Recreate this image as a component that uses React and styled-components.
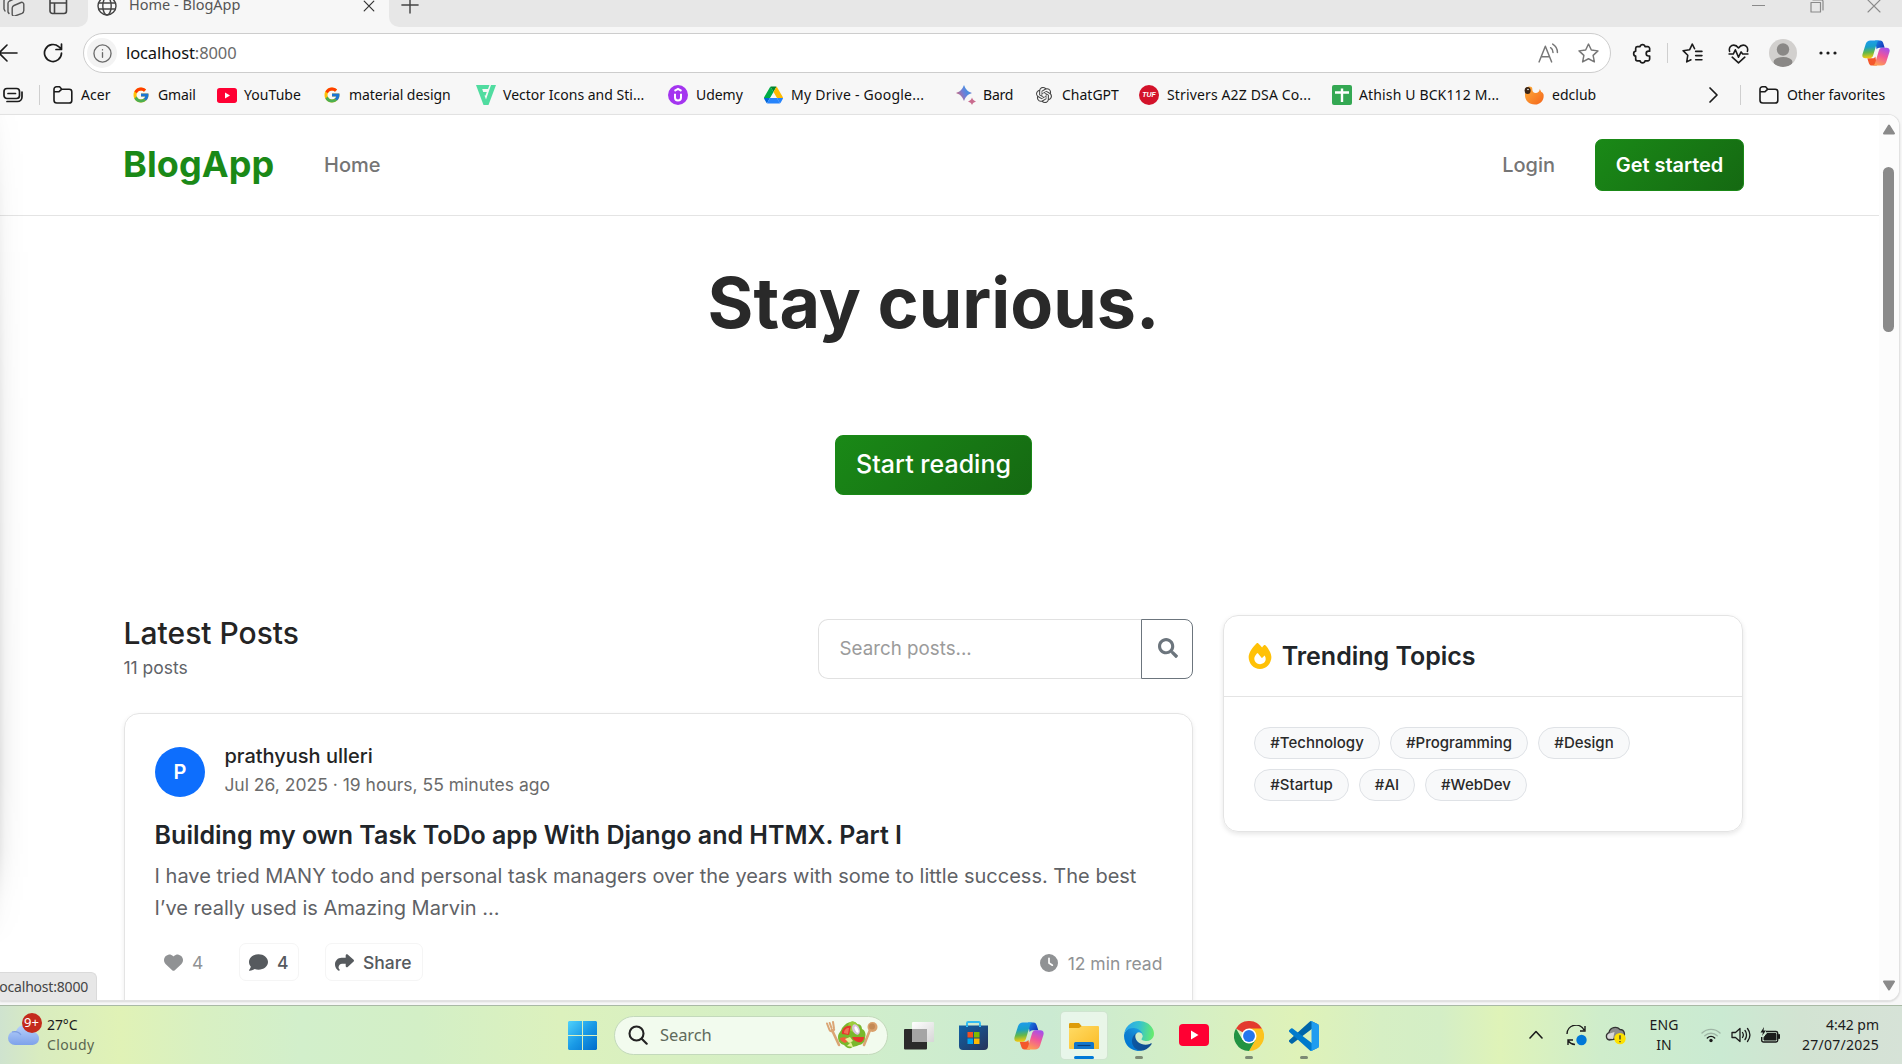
import React from "react";
import styled, { createGlobalStyle } from "styled-components";
import { FaHeart, FaComment, FaShare, FaClock, FaFire } from "react-icons/fa6";
import { FaSearch } from "react-icons/fa";
import { FcGoogle } from "react-icons/fc";
import { SiOpenai } from "react-icons/si";

const UI = '"Noto Sans", "Open Sans", sans-serif';
const BODY = 'Inter, "Liberation Sans", sans-serif';

const Global = createGlobalStyle`
  * { box-sizing: border-box; }
  html, body { margin: 0; padding: 0; overflow: hidden; }
  body { background: #f7f7f7; }
  svg { display: block; flex: none; }
`;

const Screen = styled.div`
  width: 1902px;
  height: 1064px;
  display: flex;
  flex-direction: column;
  overflow: hidden;
  background: #f7f7f7;
  font-family: ${UI};
`;

/* Generic flow slot for one item of a bar */
const Slot = styled.div`
  display: flex;
  align-items: ${(p) => (p.$top ? "flex-start" : "center")};
  flex: none;
  width: ${(p) => (p.$w ? p.$w + "px" : "auto")};
  height: ${(p) => (p.$h ? p.$h + "px" : "auto")};
  margin-left: ${(p) => p.$ml || 0}px;
`;

const Label = styled.span`
  font-size: ${(p) => p.$size || 14}px;
  letter-spacing: ${(p) => p.$ls || 0}px;
  color: ${(p) => p.$color || "#1b1b1b"};
  line-height: 20px;
  white-space: nowrap;
`;

/* ---------- Tab strip ---------- */
const TabStrip = styled.div`
  height: 27px;
  flex: none;
  display: flex;
  background: #f7f7f7;
`;
const StripLeft = styled.div`
  width: 88px;
  display: flex;
  background: #e7e7e7;
  border-bottom-right-radius: 10px;
`;
const ActiveTab = styled.div`
  width: 301px;
  display: flex;
  height: 11px;
  align-items: center;
`;
const TabTitle = styled(Label)`
  margin-top: -3px;
`;
const StripRight = styled.div`
  flex: 1;
  display: flex;
  background: #e7e7e7;
  border-bottom-left-radius: 10px;
`;

/* ---------- Toolbar ---------- */
const Toolbar = styled.div`
  height: 52px;
  flex: none;
  display: flex;
  align-items: center;
`;
const AddressBar = styled.div`
  width: 1528px;
  height: 40px;
  margin-left: 20px;
  display: flex;
  align-items: center;
  background: #fff;
  border: 1.5px solid #cdcdcd;
  border-radius: 20px;
`;
const InfoBadge = styled.div`
  width: 30px;
  height: 30px;
  margin-left: 3px;
  border-radius: 50%;
  background: #f3f3f3;
  display: grid;
  place-items: center;
`;
const Url = styled.span`
  width: 1404px;
  margin-left: 9px;
  font-size: 16.5px;
  letter-spacing: -0.1px;
  line-height: 24px;
  color: #111;
  em {
    font-style: normal;
    color: #6a6a6a;
  }
`;
const Divider = styled.div`
  width: 1px;
  height: 20px;
  flex: none;
  margin-left: ${(p) => p.$ml}px;
  background: #cfcfcf;
`;
const Avatar = styled.div`
  width: 28px;
  height: 28px;
  margin-left: 20px;
  border-radius: 50%;
  overflow: hidden;
  background: #d2d0ce;
`;

/* ---------- Favorites ---------- */
const Favorites = styled.div`
  height: 35px;
  flex: none;
  display: flex;
  align-items: center;
  padding-bottom: 3px;
`;
const Favorite = styled.div`
  width: ${(p) => p.$w}px;
  display: flex;
  align-items: center;
  gap: ${(p) => p.$gap || 7}px;
  flex: none;
`;
const FavIcon = styled.div`
  width: 20px;
  height: 20px;
  flex: none;
  display: grid;
  place-items: center;
`;
const TufBadge = styled.div`
  width: 20px;
  height: 20px;
  border-radius: 50%;
  background: #d3122a;
  color: #fff;
  font: italic 700 7px/20px "Liberation Sans", sans-serif;
  text-align: center;
`;

/* ---------- Page viewport ---------- */
const Viewport = styled.div`
  height: 887px;
  width: 1900px;
  flex: none;
  position: relative;
  display: flex;
  background: #fff;
  border: 1px solid #e2e2e2;
  border-left: 0;
  border-radius: 0 12px 12px 0;
  box-shadow: 0 1px 2px rgba(0, 0, 0, 0.12);
  overflow: hidden;
`;
const EdgeShadow = styled.div`
  position: absolute;
  left: 0;
  top: 0;
  width: 30px;
  height: 830px;
  pointer-events: none;
  background: linear-gradient(
    90deg,
    rgba(0, 0, 0, 0.11) 0,
    rgba(0, 0, 0, 0.055) 5px,
    rgba(0, 0, 0, 0.022) 12px,
    rgba(0, 0, 0, 0.008) 21px,
    transparent 30px
  );
  mask-image: linear-gradient(
    180deg,
    rgba(0, 0, 0, 0.1) 0,
    rgba(0, 0, 0, 0.4) 80px,
    rgba(0, 0, 0, 0.75) 280px,
    #000 660px,
    rgba(0, 0, 0, 0.8) 735px,
    rgba(0, 0, 0, 0.25) 785px,
    transparent 830px
  );
`;
const StatusBubble = styled.div`
  position: absolute;
  left: 0;
  bottom: 0;
  width: 97px;
  height: 28px;
  overflow: hidden;
  background: #e7e7e7;
  border: 1px solid #dadada;
  border-left: 0;
  border-bottom: 0;
  border-top-right-radius: 6px;
  display: flex;
  align-items: center;
  justify-content: flex-end;
  padding-right: 8px;
`;
const Page = styled.div`
  width: 1879px;
  height: 100%;
  overflow: hidden;
  font-family: ${BODY};
  color: #212529;
`;
const Scrollbar = styled.div`
  width: 20px;
  display: flex;
  flex-direction: column;
  align-items: center;
  background: #fcfcfc;
  padding: 9px 1px 0 0;
`;
const Thumb = styled.div`
  width: 11px;
  height: 165px;
  margin: 32px 0 648px 0;
  border-radius: 6px;
  background: #8a8a8a;
`;

const Nav = styled.nav`
  height: 101px;
  padding: 0 135px 0 123px;
  border-bottom: 1px solid #e4e4e4;
  display: flex;
  align-items: center;
`;
const Brand = styled.span`
  width: 201px;
  margin-top: -2px;
  font-size: 36px;
  font-weight: 700;
  letter-spacing: 0.1px;
  color: #1a8917;
`;
const NavLink = styled.span`
  font-size: 20px;
  font-weight: 500;
  color: #757575;
`;
const Button = styled.button`
  display: grid;
  place-items: center;
  height: ${(p) => (p.$large ? 60 : 52)}px;
  width: ${(p) => (p.$large ? 197 : 149)}px;
  padding: ${(p) => (p.$large ? "0 0 2px" : "0")};
  border: 1px solid #1a8917;
  border-radius: ${(p) => (p.$large ? 8 : 7)}px;
  background: linear-gradient(135deg, #1a8917 0%, #156912 100%);
  color: #fff;
  font-family: ${BODY};
  font-size: ${(p) => (p.$large ? 25 : 20)}px;
  font-weight: ${(p) => (p.$large ? 500 : 600)};
  letter-spacing: ${(p) => (p.$large ? 0 : -0.05)}px;
`;
const NavRight = styled.div`
  margin-left: auto;
  display: flex;
  align-items: center;
  gap: 40px;
`;

const Hero = styled.section`
  width: 1619px;
  height: 399px;
  margin-left: 124px;
  padding-top: 45px;
  display: flex;
  flex-direction: column;
  align-items: center;
`;
const HeroTitle = styled.h1`
  margin: 0 0 90px;
  font-size: 70px;
  line-height: 84px;
  font-weight: 700;
  color: #292929;
`;

const Columns = styled.div`
  display: flex;
  align-items: flex-start;
  gap: 30px;
  margin-left: 124px;
`;
const Feed = styled.main`
  width: 1069px;
`;
const FeedHead = styled.div`
  display: flex;
  justify-content: space-between;
  height: 98px;
`;
const FeedTitle = styled.h4`
  margin: 0 0 0 -0.4px;
  font-size: 30px;
  line-height: 36px;
  font-weight: 500;
  color: #242424;
`;
const FeedCount = styled.div`
  font-size: 17.5px;
  line-height: 26px;
  margin: 4px 0 0 -0.6px;
  color: #5f6368;
`;
const SearchBox = styled.div`
  display: flex;
  width: 375px;
  height: 60px;
  margin-top: 4px;
`;
const SearchField = styled.div`
  flex: 1;
  border: 1px solid #e1e1e1;
  border-right: 0;
  border-radius: 10px 0 0 10px;
  padding-left: 20.6px;
  line-height: 58px;
  font-size: 18.75px;
  color: #9b9b9b;
`;
const SearchButton = styled.div`
  width: 52px;
  border: 1px solid #6c757d;
  border-radius: 0 8px 8px 0;
  display: grid;
  place-items: center;
  padding: 0 0 2px 1px;
  color: #6c757d;
`;

const PostCard = styled.article`
  height: 330px;
  border: 1px solid #e4e4e4;
  border-radius: 15px;
  box-shadow: 0 2px 5px rgba(0, 0, 0, 0.08);
  padding: 30px 29.6px 0 29.6px;
`;
const Author = styled.div`
  display: flex;
  gap: 19.4px;
  height: 71px;
`;
const AuthorAvatar = styled.div`
  width: 50px;
  height: 50px;
  margin: 3px 0 0 0.4px;
  border-radius: 50%;
  background: #0d6efd;
  color: #fff;
  display: grid;
  place-items: center;
  font-size: 20px;
  font-weight: 600;
`;
const AuthorName = styled.div`
  margin-top: -1px;
  font-size: 20px;
  line-height: 26px;
  font-weight: 500;
  color: #242424;
`;
const PostDate = styled.div`
  font-size: 17.5px;
  line-height: 26px;
  margin-top: 3px;
  color: #6b6b6b;
`;
const PostTitle = styled.h3`
  margin: 3px 0 8px;
  font-size: 25px;
  line-height: 34px;
  font-weight: 600;
  color: #212529;
  white-space: nowrap;
`;
const Excerpt = styled.p`
  margin: 0;
  font-size: 20px;
  line-height: 32px;
  color: #5f6266;
  white-space: nowrap;
`;
const Actions = styled.div`
  display: flex;
  align-items: center;
  margin: 19px 0 0 0.4px;
  height: 38px;
`;
const Action = styled.div`
  width: ${(p) => p.$w}px;
  height: 38px;
  margin-right: ${(p) => p.$mr || 0}px;
  padding-left: ${(p) => (p.$outlined ? 9.5 : 9)}px;
  display: flex;
  align-items: center;
  gap: ${(p) => (p.$outlined ? 8.5 : 9)}px;
  border: ${(p) => (p.$outlined ? "1px solid #f5f5f5" : "0")};
  border-radius: 7px;
  color: ${(p) => (p.$outlined ? "#565a5e" : "#909294")};
  font-size: 17.5px;
  font-weight: ${(p) => (p.$outlined ? 500 : 400)};
`;
const ReadTime = styled.div`
  margin-left: auto;
  padding-top: 2px;
  display: flex;
  align-items: center;
  gap: 9.5px;
  font-size: 17.5px;
  color: #909294;
`;

const Trending = styled.aside`
  width: 520px;
  height: 217px;
  border: 1px solid #e4e4e4;
  border-radius: 15px;
  box-shadow: 0 2px 5px rgba(0, 0, 0, 0.1);
`;
const TrendingHead = styled.div`
  height: 81px;
  display: flex;
  align-items: center;
  gap: 8.4px;
  padding-left: 23.3px;
  border-bottom: 1px solid #e4e4e4;
  font-size: 25px;
  font-weight: 600;
  letter-spacing: -0.02px;
  color: #212529;
`;
const Tags = styled.div`
  display: flex;
  flex-wrap: wrap;
  gap: 10px;
  padding: 30px 100px 0 30px;
`;
const Tag = styled.span`
  width: ${(p) => p.$w}px;
  height: 32px;
  border: 1px solid #dfe2e6;
  border-radius: 16px;
  background: #f8f9fa;
  font-size: 15px;
  font-weight: 500;
  line-height: 30px;
  text-align: center;
  color: #292929;
  white-space: nowrap;
`;

/* ---------- Taskbar ---------- */
const Taskbar = styled.div`
  flex: none;
  height: 59px;
  margin-top: 4px;
  border-top: 1px solid #a9b9a5;
  display: flex;
  align-items: center;
  background: linear-gradient(
    90deg,
    #cfe3cf 0,
    #d9ecbf 40px,
    #e0f2b6 120px,
    #d8f0c2 200px,
    #d2efcb 300px,
    #d3efc6 420px,
    #dcf1bd 560px,
    #d8f0c2 680px,
    #d0eecb 860px,
    #cbead2 1050px,
    #d2eec8 1160px,
    #dff2b8 1300px,
    #d6efc4 1380px,
    #d4eec6 1440px,
    #dff3b8 1500px,
    #cfedcb 1600px,
    #caead2 1720px,
    #d2e3d2 1800px,
    #d6e2d7 1902px
  );
`;
const Stack = styled.div`
  display: flex;
  flex-direction: column;
  flex: none;
  align-items: ${(p) => p.$align || "flex-start"};
  width: ${(p) => p.$w}px;
  margin-left: ${(p) => p.$ml || 0}px;
`;
const WeatherIcon = styled.div`
  position: relative;
  width: 40px;
  height: 40px;
  margin-left: 5px;
  flex: none;
`;
const Badge = styled.span`
  position: absolute;
  left: 16.5px;
  top: -2px;
  width: 20px;
  height: 20px;
  border-radius: 50%;
  background: #c42b1c;
  color: #fff;
  font-size: 13px;
  line-height: 19px;
  text-align: center;
`;
const TaskSearch = styled.div`
  width: 274px;
  height: 39px;
  margin-left: 17px;
  border: 1px solid #c3d9bb;
  border-radius: 20px;
  background: #f2fbee;
  display: flex;
  align-items: center;
  padding: 0 10px 0 13px;
`;
const Apps = styled.div`
  display: flex;
  margin-left: 7px;
  gap: 7px;
`;
const AppButton = styled.div`
  width: 48px;
  height: 49px;
  border-radius: 5px;
  display: flex;
  flex-direction: column;
  align-items: center;
  padding-top: 9px;
  background: ${(p) => (p.$active ? "rgba(255,255,255,0.55)" : "transparent")};
  border: 1px solid ${(p) => (p.$active ? "rgba(190,215,190,0.6)" : "transparent")};
`;
const Indicator = styled.div`
  width: ${(p) => (p.$active ? 20 : 8)}px;
  height: 4px;
  margin-top: ${(p) => (p.$active ? 6 : 5)}px;
  border-radius: 2px;
  background: ${(p) => (p.$active ? "#0078d7" : "#7c8a74")};
`;

/* ---------- Line icons ---------- */
const Line = ({ w = 20, h, vb = "0 0 20 20", sw = 1.4, c = "#1b1b1b", children }) => (
  <svg
    width={w}
    height={h || w}
    viewBox={vb}
    fill="none"
    stroke={c}
    strokeWidth={sw}
    strokeLinecap="round"
    strokeLinejoin="round"
  >
    {children}
  </svg>
);

const Folder = () => (
  <Line sw={1.6}>
    <path d="M1 4.200a2.400 2.400 0 0 1 2.400-2.400h3.200l2.200 2.400h7.400a2.600 2.600 0 0 1 2.600 2.600v8.600a2.600 2.600 0 0 1-2.600 2.600H3.800A2.800 2.800 0 0 1 1 15.200zM1 6.800h4.800l3-2.600" />
  </Line>
);

const CopilotIcon = ({ size = 30 }) => (
  <svg width={size} height={size} viewBox="0 0 30 30">
    <defs>
      <linearGradient id="cpA" x1="0" y1="0" x2="0.1" y2="1">
        <stop offset="0" stopColor="#1f9bf0" />
        <stop offset="0.4" stopColor="#18a0c8" />
        <stop offset="0.7" stopColor="#63b84a" />
        <stop offset="1" stopColor="#f2c811" />
      </linearGradient>
      <linearGradient id="cpB" x1="0.7" y1="0" x2="0.3" y2="1">
        <stop offset="0" stopColor="#a650ea" />
        <stop offset="0.45" stopColor="#f0569a" />
        <stop offset="1" stopColor="#ffa050" />
      </linearGradient>
      <linearGradient id="cpC" x1="0" y1="0" x2="1" y2="0.6">
        <stop offset="0" stopColor="#1a8ae8" />
        <stop offset="1" stopColor="#1434b8" />
      </linearGradient>
    </defs>
    <path d="M14 1.500h5.500c1.800 0 2.700 1.200 3.200 2.800l1.600 5h-5.800c-1.300 0-2.400.8-2.800 2z" fill="url(#cpC)" />
    <path d="M16 28.500h-5.500c-1.800 0-2.700-1.200-3.200-2.800L5.700 20.700h5.800c1.300 0 2.400-.8 2.800-2z" fill="#f4582c" />
    <path d="M9 1.500h9.500c-1.500.3-2.200 1.700-2.700 3.200L12 17.500c-.5 1.800-1.700 3.200-3.500 3.200H3.600c-2.600 0-3.800-1.800-3-4.600L4 5.300C4.800 2.800 6.500 1.500 9 1.500z" fill="url(#cpA)" />
    <path d="M21 28.500h-9.500c1.500-.3 2.200-1.700 2.700-3.200L18 12.500c.5-1.800 1.700-3.200 3.500-3.200h4.900c2.600 0 3.800 1.800 3 4.600L26 24.700c-.8 2.500-2.500 3.800-5 3.800z" fill="url(#cpB)" />
  </svg>
);

const YouTube = ({ w, h }) => (
  <svg width={w} height={h} viewBox="0 0 30 22" preserveAspectRatio="none">
    <rect width="30" height="22" rx="4" fill="#ff0033" />
    <path d="M12 6.500v9l7.500-4.500z" fill="#fff" />
  </svg>
);

const Drive = () => (
  <svg width="19" height="18" viewBox="0 0 87.300 78">
    <path d="m6.600 66.850 3.850 6.650c.8 1.400 1.950 2.500 3.300 3.300l13.750-23.800H0c0 1.550.4 3.100 1.200 4.500z" fill="#0066da" />
    <path d="m43.650 25-13.750-23.800c-1.350.8-2.500 1.900-3.300 3.300L1.200 48.500A9 9 0 0 0 0 53h27.500z" fill="#00ac47" />
    <path d="M73.550 76.800c1.350-.8 2.500-1.900 3.300-3.300l1.600-2.750 7.650-13.250c.8-1.400 1.200-2.950 1.200-4.500H59.800l5.850 11.500z" fill="#2684fc" />
    <path d="M43.650 25 57.400 1.200C56.050.4 54.500 0 52.900 0H34.400c-1.600 0-3.150.45-4.500 1.200z" fill="#00832d" />
    <path d="M59.800 53H27.500L13.750 76.800c1.350.8 2.900 1.200 4.500 1.200h50.800c1.600 0 3.150-.45 4.500-1.200z" fill="#2684fc" />
    <path d="m73.400 26.500-12.700-22c-.8-1.400-1.950-2.500-3.300-3.300L43.650 25 59.800 53h27.450c0-1.550-.4-3.100-1.200-4.500z" fill="#ffba00" />
  </svg>
);

const VectorMark = () => (
  <svg width="20" height="20" viewBox="0 0 20 20">
    <path d="M0 0h13.500l-1.500 4H6.200L7.200 7h3.600L9.500 10.500H8.500l1.500 4L15 0h5l-7.500 20H7.500z" fill="#50dca0" />
  </svg>
);

const Udemy = () => (
  <svg width="20" height="20" viewBox="0 0 20 20">
    <circle cx="10" cy="10" r="10" fill="#a435f0" />
    <path d="M6.500 5.800 10 3.800l3.500 2M7 8.800v3.700a3 3 0 0 0 6 0V8.800" fill="none" stroke="#fff" strokeWidth="2" />
  </svg>
);

const Bard = () => (
  <svg width="20" height="20" viewBox="0 0 20 20">
    <defs>
      <linearGradient id="bardG" x1="0" y1="0.7" x2="1" y2="0.2">
        <stop offset="0" stopColor="#d96570" />
        <stop offset="0.45" stopColor="#6f7fd8" />
        <stop offset="0.7" stopColor="#4a8fe0" />
        <stop offset="1" stopColor="#a07bc8" />
      </linearGradient>
    </defs>
    <path d="M8 0c1.800 4.600 3.400 6.200 8 8-4.600 1.800-6.200 3.400-8 8-1.800-4.600-3.400-6.200-8-8 4.600-1.800 6.200-3.400 8-8z" fill="url(#bardG)" />
    <path d="M16 12.500c.8 2.200 1.700 3.100 4 4-2.300.9-3.200 1.500-4 3.500-.8-2-1.700-2.600-4-3.500 2.300-.9 3.200-1.800 4-4z" fill="#c96b8e" />
  </svg>
);

const Sheets = () => (
  <svg width="20" height="20" viewBox="0 0 20 20">
    <rect width="20" height="20" rx="2" fill="#34a853" />
    <path d="M3 7.500h14M10 3.500v13.500" stroke="#fff" strokeWidth="2.400" />
  </svg>
);

const EdClub = () => (
  <svg width="20" height="19" viewBox="0 0 20 19">
    <defs>
      <linearGradient id="edG" x1="0" y1="0" x2="1" y2="1">
        <stop offset="0" stopColor="#ffb03a" />
        <stop offset="1" stopColor="#f4651c" />
      </linearGradient>
    </defs>
    <path d="M2 2C4-.3 8.500-.3 8.300 3c-.1 2.500 1 4 3.500 4 2 0 3.700-1.500 4-4l1.500 3c1 .2 1.700 1.200 2.200 2.200 1 5-2.500 10.300-8.500 10.300C4.500 18.500.5 14 1 8z" fill="url(#edG)" />
    <ellipse cx="3.600" cy="4.500" rx="3" ry="3.500" fill="#3a2415" />
    <circle cx="4" cy="3.500" r="0.800" fill="#fff" />
  </svg>
);

const Windows = () => (
  <svg width="29" height="29" viewBox="0 0 29 29">
    <defs>
      <linearGradient id="winG" x1="0" y1="0" x2="29" y2="29" gradientUnits="userSpaceOnUse">
        <stop offset="0" stopColor="#4fd2fb" />
        <stop offset="0.5" stopColor="#1a9ae6" />
        <stop offset="1" stopColor="#006ccb" />
      </linearGradient>
    </defs>
    <path d="M1 0h13v14H0V1zM15 0h13l1 1v13H15zM0 15h14v14H1l-1-1zM15 15h14v13l-1 1H15z" fill="url(#winG)" />
  </svg>
);

const Salad = () => (
  <svg width="52" height="28" viewBox="0 0 52 28">
    <path d="m6 9 7 15M44 9l-6 15" stroke="#dba574" strokeWidth="2.600" strokeLinecap="round" />
    <path d="M1 2.500 3.500 9c1 2.500 5.500 1 4.500-1.500L7 1M3.700 2 5.500 7" fill="none" stroke="#dba574" strokeWidth="2" strokeLinecap="round" />
    <circle cx="46.500" cy="6" r="5" fill="#d9a06b" />
    <circle cx="46" cy="5.500" r="3" fill="#c48a55" />
    <path d="M12 16c0-4 3-5 4-9 3-4 6-6 9-6 2-1 5 0 6 2 4 0 5 3 5 5 4 2 4 6 3 9 0 4-3 7-6 7-3 2-6 1-8 3-3 1-5-1-7-3-4-1-6-4-6-8z" fill="#79b82c" />
    <path d="M24 1c4-2 9 2 9 6s-5 5-8 3-4-6-1-9z" fill="#9ccc3c" />
    <path d="M16 13c-1-4 3-9 9-8l-2 9z" fill="#e5382b" />
    <path d="M18 12c0-3 2-5 5-5l-1 6z" fill="#f27258" />
    <path d="M26 16h12c0 4-3 6-6 5s-5-2-6-5z" fill="#e5382b" />
    <path d="M14 17c4-2 9 0 10 2l-5 3c-3-1-5-3-5-5z" fill="#f0603a" />
    <ellipse cx="30" cy="8.500" rx="3.500" ry="5.500" fill="#d9c3dc" transform="rotate(-25 30 8.500)" />
    <ellipse cx="30.500" cy="8.800" rx="1.500" ry="3.500" fill="#fff" transform="rotate(-25 30 8.500)" />
    <path d="m19 18 5-2 3 4-4 2zM21 25l4-4 2 5z" fill="#e8f09a" />
  </svg>
);

const TaskView = () => (
  <svg width="30" height="29" viewBox="0 0 30 29">
    <defs>
      <linearGradient id="tvG" x1="0" y1="0" x2="1" y2="1">
        <stop offset="0" stopColor="#fff" />
        <stop offset="1" stopColor="#d6d6d6" />
      </linearGradient>
    </defs>
    <rect y="8" width="23" height="20.500" rx="1" fill="#2b2b2b" />
    <rect x="8" y="1" width="22" height="20" rx="1" fill="url(#tvG)" />
    <path d="M8 8h15v13H9l-1-1z" fill="#a5a5a5" />
  </svg>
);

const Store = () => (
  <svg width="30" height="29" viewBox="0 0 30 29">
    <defs>
      <linearGradient id="stG" x1="0" y1="0" x2="1" y2="1">
        <stop offset="0" stopColor="#0f62a8" />
        <stop offset="1" stopColor="#27335a" />
      </linearGradient>
    </defs>
    <path d="M8 6V2.200C8 1.400 8.400 1 9.200 1h10.600c.8 0 1.200.4 1.200 1.200V6" fill="none" stroke="#32bdf2" strokeWidth="2" />
    <path d="M0 4.500h29V25a4 4 0 0 1-4 4H4a4 4 0 0 1-4-4z" fill="url(#stG)" />
    <path d="M8 4.500V6M21 4.500V6" stroke="#32bdf2" strokeWidth="2" />
    <path d="M8.500 11H14v5.500H8.500z" fill="#f25022" />
    <path d="M15 11h5.500v5.500H15z" fill="#7fba00" />
    <path d="M8.500 17.500H14V23H8.500z" fill="#00a4ef" />
    <path d="M15 17.500h5.500V23H15z" fill="#ffb900" />
  </svg>
);

const Explorer = () => (
  <svg width="30" height="29" viewBox="0 0 30 29">
    <defs>
      <linearGradient id="exG" x1="0" y1="0" x2="1" y2="1">
        <stop offset="0" stopColor="#ffdb65" />
        <stop offset="1" stopColor="#fbbc26" />
      </linearGradient>
    </defs>
    <path d="M0 3.200A1.200 1.200 0 0 1 1.200 2H10l3 3.500L10 9H0z" fill="#dd9c0a" />
    <path d="M0 7h10l3-2h16a1 1 0 0 1 1 1v22H1a1 1 0 0 1-1-1z" fill="url(#exG)" />
    <path d="M5 28v-5.500A1.500 1.500 0 0 1 6.500 21h17a1.500 1.500 0 0 1 1.500 1.500V28z" fill="#1276cc" />
    <path d="M8.500 24.500h13" stroke="#0b3f78" strokeWidth="1.200" />
  </svg>
);

const Edge = () => (
  <svg width="30" height="30" viewBox="0 0 256 256">
    <defs>
      <linearGradient id="egA" x1="63" y1="178" x2="241" y2="178" gradientUnits="userSpaceOnUse">
        <stop offset="0" stopColor="#0c59a4" />
        <stop offset="1" stopColor="#114a8b" />
      </linearGradient>
      <linearGradient id="egB" x1="157" y1="100" x2="46" y2="222" gradientUnits="userSpaceOnUse">
        <stop offset="0" stopColor="#1b9de2" />
        <stop offset="0.5" stopColor="#0f80d0" />
        <stop offset="1" stopColor="#0078d4" />
      </linearGradient>
      <linearGradient id="egC" x1="20" y1="70" x2="250" y2="100" gradientUnits="userSpaceOnUse">
        <stop offset="0" stopColor="#2aa8e8" />
        <stop offset="0.45" stopColor="#35c1d0" />
        <stop offset="1" stopColor="#66eb6e" />
      </linearGradient>
    </defs>
    <path fill="url(#egA)" d="M231 190.500c-3.400 1.800-6.900 3.400-10.500 4.700a101.700 101.700 0 0 1-35.900 6.500c-47.300 0-88.500-32.500-88.500-74.300a31.500 31.500 0 0 1 16.400-27.300c-42.800 1.800-53.800 46.400-53.800 72.500 0 73.900 68.100 81.400 82.800 81.400 7.900 0 19.800-2.300 27-4.600l1.300-.4a128.300 128.300 0 0 0 66.600-52.800 4 4 0 0 0-5.400-5.700z" />
    <path fill="url(#egB)" d="M105.700 241.400a79.200 79.200 0 0 1-22.700-21.300 80.700 80.700 0 0 1 29.500-120c3.200-1.500 8.500-4.100 15.600-4a32.400 32.400 0 0 1 25.700 13 31.900 31.900 0 0 1 6.300 18.700c0-.2 24.500-79.600-80-79.600-43.900 0-80 41.700-80 78.200a130.200 130.200 0 0 0 12.100 56 128 128 0 0 0 156.400 67 75.500 75.500 0 0 1-62.800-8z" />
    <path fill="url(#egC)" d="M152.300 148.900c-.9 1-3.400 2.500-3.400 5.600 0 2.600 1.700 5.200 4.800 7.300 14.300 10 41.400 8.600 41.500 8.600a59.600 59.600 0 0 0 30.300-8.300 61.400 61.400 0 0 0 30.400-52.900c.3-22.400-8-37.300-11.300-43.900C223.500 23.900 177.700 0 128 0A128 128 0 0 0 0 126.200c.5-36.500 36.800-66 80-66 3.500 0 23.500.3 42 10a72.600 72.600 0 0 1 30.900 29.300c6.100 10.600 7.200 24.100 7.200 29.500s-2.700 13.300-7.800 19.900z" />
  </svg>
);

const Chrome = () => (
  <svg width="30" height="30" viewBox="0 0 48 48">
    <path d="M24 24 3.200 12A24 24 0 0 1 44.800 12z" fill="#e33b2e" />
    <path d="M24 12h20.800A24 24 0 0 1 24 48l10.400-18z" fill="#fcc31e" />
    <path d="M3.200 12 13.600 30 34.400 30 24 48A24 24 0 0 1 3.200 12z" fill="#229342" />
    <circle cx="24" cy="24" r="12" fill="#fff" />
    <circle cx="24" cy="24" r="9.500" fill="#2476ee" />
  </svg>
);

const VSCode = () => (
  <svg width="30" height="30" viewBox="0 0 100 100">
    <path d="M96.500 10.800 75.900.9a6.200 6.200 0 0 0-7.100 1.200L1.300 63.600a4.200 4.200 0 0 0 0 6.200l5.500 5a4.200 4.200 0 0 0 5.300.2L93.400 13.400A4.100 4.100 0 0 1 100 16.700v-.2a6.300 6.300 0 0 0-3.500-5.700z" fill="#0065a9" />
    <path d="m96.500 89.200-20.600 9.900a6.200 6.200 0 0 1-7.100-1.200L1.300 36.400a4.200 4.200 0 0 1 0-6.200l5.500-5a4.200 4.200 0 0 1 5.300-.2l81.300 61.600a4.100 4.100 0 0 0 6.600-3.300v.2a6.300 6.300 0 0 1-3.500 5.700z" fill="#007acc" />
    <path d="M75.900 99.100a6.200 6.200 0 0 1-7.100-1.200 3.700 3.700 0 0 0 6.200-2.600V4.700a3.700 3.700 0 0 0-6.200-2.600A6.200 6.200 0 0 1 75.900.9l20.600 9.900a6.200 6.200 0 0 1 3.500 5.700v67a6.200 6.200 0 0 1-3.500 5.700z" fill="#1f9cf0" />
  </svg>
);

const Cloud = () => (
  <svg width="40" height="40" viewBox="0 0 40 40">
    <defs>
      <linearGradient id="clG" x1="0" y1="0" x2="0" y2="1">
        <stop offset="0" stopColor="#b9d2fb" />
        <stop offset="1" stopColor="#7ea2ea" />
      </linearGradient>
    </defs>
    <path d="M10 30a7 7 0 0 1 0-14h1a9.500 9.500 0 0 1 18 1 6.600 6.600 0 0 1-2 13z" fill="url(#clG)" />
    <path d="M7 17c4-1 7 0 9 3" fill="none" stroke="#7d9ee0" strokeWidth="1.200" />
  </svg>
);

const favorites = [
  { w: 78, text: "Acer", ls: 0.1, gap: 8, icon: <Folder /> },
  { w: 86, text: "Gmail", ls: -0.1, icon: <FcGoogle size={18} /> },
  { w: 105, text: "YouTube", ls: 0.05, icon: <YouTube w={20} h={15} /> },
  { w: 154, text: "material design", ls: -0.06, icon: <FcGoogle size={18} /> },
  { w: 192, text: "Vector Icons and Sti...", ls: 0.01, icon: <VectorMark /> },
  { w: 95, text: "Udemy", ls: -0.05, gap: 8, icon: <Udemy /> },
  { w: 193, text: "My Drive - Google...", ls: 0.24, gap: 8, icon: <Drive /> },
  { w: 78, text: "Bard", ls: -0.2, icon: <Bard /> },
  { w: 105, text: "ChatGPT", ls: 0, gap: 8, icon: <SiOpenai size={16} color="#444" /> },
  { w: 193, text: "Strivers A2Z DSA Co...", ls: 0.14, gap: 8, icon: <TufBadge>TUF</TufBadge> },
  { w: 192, text: "Athish U BCK112 M...", ls: 0.14, icon: <Sheets /> },
  { w: 183, text: "edclub", ls: 0.02, gap: 8, icon: <EdClub /> },
];

const tags = [
  ["#Technology", 126],
  ["#Programming", 138],
  ["#Design", 92],
  ["#Startup", 95],
  ["#AI", 56],
  ["#WebDev", 102],
];

const apps = [
  { icon: <TaskView /> },
  { icon: <Store /> },
  { icon: <CopilotIcon /> },
  { icon: <Explorer />, active: true },
  { icon: <Edge />, running: true },
  { icon: <Slot $h={29}><YouTube w={30} h={22} /></Slot> },
  { icon: <Chrome />, running: true },
  { icon: <VSCode />, running: true },
];

export default function App() {
  return (
    <Screen>
      <Global />
      <TabStrip>
        <StripLeft>
          <Slot $ml={3} $w={22} $top>
            <Line w={22} h={16} vb="0 4 22 16" c="#555">
              <path d="M8.500 2H4a3 3 0 0 0-3 3v8l1 2M11 3 6.500 5A3 3 0 0 0 5 8v8l1 1.500M11 9.500 18 6.500a2 2 0 0 1 2.800 2v6a3 3 0 0 1-1.800 2.800L12 20a2 2 0 0 1-2.800-2v-6a3 3 0 0 1 1.800-2.500z" />
            </Line>
          </Slot>
          <Slot $ml={24} $w={20} $top>
            <Line w={19} h={16} vb="0 4 19 16" c="#444" sw={1.6}>
              <path d="M1 3v12a2.500 2.500 0 0 0 2.500 2.500h11.500a2.500 2.500 0 0 0 2.500-2.500V3M1 7h16.500M5.500 7v10.500" />
            </Line>
          </Slot>
        </StripLeft>
        <ActiveTab>
          <Slot $ml={9}>
            <Line w={20} h={20} c="#444">
              <circle cx="10" cy="10" r="9" />
              <ellipse cx="10" cy="10" rx="4.200" ry="9" />
              <path d="M1.800 7h16.400M1.800 13h16.400" />
            </Line>
          </Slot>
          <Slot $ml={12} $w={234}>
            <TabTitle $size={14.5} $color="#555">Home - BlogApp</TabTitle>
          </Slot>
          <Line w={12} c="#333" sw={2}>
            <path d="m2 2 16 16M18 2 2 18" />
          </Line>
        </ActiveTab>
        <StripRight>
          <Slot $ml={12} $w={1351} $h={10}>
            <Line w={18} c="#444" sw={1.6}>
              <path d="M10 1v18M1 10h18" />
            </Line>
          </Slot>
          <Slot $w={58} $h={11}>
            <Line w={13} h={3} vb="0 0 13 3" c="#8a8a8a" sw={1}>
              <path d="M0 1.500h13" />
            </Line>
          </Slot>
          <Slot $w={57} $h={12}>
            <Line w={14} h={14} vb="0 0 14 14" c="#8a8a8a" sw={1.2}>
              <path d="M1 3.500h9.500V13H1zM3 1h8.500a1.500 1.500 0 0 1 1.500 1.500V11" />
            </Line>
          </Slot>
          <Slot $h={12}>
            <Line w={14} h={14} vb="0 0 14 14" c="#8a8a8a" sw={1.1}>
              <path d="m1 1 12 12M13 1 1 13" />
            </Line>
          </Slot>
        </StripRight>
      </TabStrip>

      <Toolbar>
        <Slot $w={43}>
          <Line w={19} h={20} vb="3 0 19 20" sw={1.6}>
            <path d="M20 10H1M10 2l-8 8 8 8" />
          </Line>
        </Slot>
        <Line sw={1.7}>
          <path d="M18.500 10a8.500 8.500 0 1 1-2.800-6.300L18.500 6M18.500 1v5.500H13" />
        </Line>
        <AddressBar>
          <InfoBadge>
            <Line w={19} c="#6a6a6a" sw={1.4}>
              <circle cx="10" cy="10" r="9" />
              <path d="M10 9v5M10 6v.2" />
            </Line>
          </InfoBadge>
          <Url>
            localhost<em>:8000</em>
          </Url>
          <Slot $ml={8} $w={40}>
            <Line w={21} c="#777">
              <path d="M1 18 7 3l6 15M3 13h8M12 4.500c1.600 1 2.300 2.500 2.300 4.500M14 1c3 1.700 4.500 4.500 4.500 8" />
            </Line>
          </Slot>
          <Line w={21} c="#777">
            <path d="m10 1 2.700 5.700 6.300.8-4.600 4.300 1.200 6.200L10 15l-5.600 3 1.200-6.200L1 7.500l6.300-.8z" />
          </Line>
        </AddressBar>
        <Slot $ml={21}>
          <Line w={21} sw={1.6}>
            <path d="M5 3.500h2.700a2.400 2.400 0 0 1 4.700 0H15a1.800 1.800 0 0 1 1.800 1.800v2.500h-1a2.300 2.300 0 0 0 0 4.600h1v2.700A1.800 1.800 0 0 1 15 17h-2.600a2.400 2.400 0 0 1-4.700 0H5.200a1.800 1.800 0 0 1-1.700-1.800v-2.700a2.400 2.400 0 0 1 0-4.700V5.200A1.700 1.700 0 0 1 5 3.500z" />
          </Line>
        </Slot>
        <Divider $ml={14} />
        <Slot $ml={14}>
          <Line w={21} sw={1.5}>
            <path d="M12 5.500 9.800 1 7.200 6.500 1 7.300l4.500 4.400-1 6.300L8.500 16M13 8h6M13 12h6M13 16h6" />
          </Line>
        </Slot>
        <Slot $ml={25}>
          <Line w={21} sw={1.5}>
            <path d="M1.500 8c-1-4 1.500-6 4-6S9 3.300 10 4.700C11 3.300 12 2 14.500 2s5 2 4 6M1 10.500h4l2-4 3 7 2.500-5 1.500 2h5M4 13.500l6 5.500 6-5.500" />
          </Line>
        </Slot>
        <Avatar>
          <svg width="28" height="28" viewBox="0 0 28 28">
            <circle cx="14" cy="10.500" r="6.200" fill="#8a8886" />
            <ellipse cx="14" cy="23" rx="9.500" ry="5" fill="#8a8886" />
          </svg>
        </Avatar>
        <Slot $ml={22} $w={43}>
          <svg width="18" height="4" viewBox="0 0 18 4" fill="#1b1b1b">
            <circle cx="2" cy="2" r="1.600" />
            <circle cx="9" cy="2" r="1.600" />
            <circle cx="16" cy="2" r="1.600" />
          </svg>
        </Slot>
        <CopilotIcon size={28} />
      </Toolbar>

      <Favorites>
        <Slot $ml={3} $w={36}>
          <Line sw={1.7}>
            <path d="M4 3.500h9.500A3 3 0 0 1 16.500 6.500v4a3 3 0 0 1-3 3H4a3 3 0 0 1-3-3v-4a3 3 0 0 1 3-3zM5 8.500h7.500M4 16.500h10.500a4.500 4.500 0 0 0 4.500-4.500V7" />
          </Line>
        </Slot>
        <Divider $ml={0} />
        <Slot $ml={13}>
          {favorites.map((f) => (
            <Favorite key={f.text} $w={f.w} $gap={f.gap}>
              <FavIcon>{f.icon}</FavIcon>
              <Label $size={14} $ls={f.ls} $color="#111">{f.text}</Label>
            </Favorite>
          ))}
        </Slot>
        <Slot $w={33}>
          <Line w={12} h={18} vb="0 0 12 18" sw={1.7}>
            <path d="m3 2 7 7-7 7" />
          </Line>
        </Slot>
        <Divider $ml={0} />
        <Slot $ml={18}>
          <Favorite $w={130} $gap={8}>
            <FavIcon>
              <Folder />
            </FavIcon>
            <Label $size={14} $ls={-0.08} $color="#111">Other favorites</Label>
          </Favorite>
        </Slot>
      </Favorites>

      <Viewport>
        <Page>
          <Nav>
            <Brand>BlogApp</Brand>
            <NavLink>Home</NavLink>
            <NavRight>
              <NavLink>Login</NavLink>
              <Button>Get started</Button>
            </NavRight>
          </Nav>
          <Hero>
            <HeroTitle>Stay curious.</HeroTitle>
            <Button $large>Start reading</Button>
          </Hero>
          <Columns>
            <Feed>
              <FeedHead>
                <div>
                  <FeedTitle>Latest Posts</FeedTitle>
                  <FeedCount>11 posts</FeedCount>
                </div>
                <SearchBox>
                  <SearchField>Search posts...</SearchField>
                  <SearchButton>
                    <FaSearch size={20} />
                  </SearchButton>
                </SearchBox>
              </FeedHead>
              <PostCard>
                <Author>
                  <AuthorAvatar>P</AuthorAvatar>
                  <div>
                    <AuthorName>prathyush ulleri</AuthorName>
                    <PostDate>Jul 26, 2025 · 19 hours, 55 minutes ago</PostDate>
                  </div>
                </Author>
                <PostTitle>Building my own Task ToDo app With Django and HTMX. Part I</PostTitle>
                <Excerpt>
                  I have tried MANY todo and personal task managers over the years with some to little success. The best
                  <br />
                  I’ve really used is Amazing Marvin ...
                </Excerpt>
                <Actions>
                  <Action $w={84}>
                    <FaHeart size={19} />4
                  </Action>
                  <Action $outlined $w={60} $mr={26}>
                    <FaComment size={19} />4
                  </Action>
                  <Action $outlined $w={98}>
                    <FaShare size={19} />
                    Share
                  </Action>
                  <ReadTime>
                    <FaClock size={18} />
                    12 min read
                  </ReadTime>
                </Actions>
              </PostCard>
            </Feed>
            <Trending>
              <TrendingHead>
                <FaFire size={26} color="#ffc107" />
                Trending Topics
              </TrendingHead>
              <Tags>
                {tags.map(([t, w]) => (
                  <Tag key={t} $w={w}>{t}</Tag>
                ))}
              </Tags>
            </Trending>
          </Columns>
        </Page>
        <Scrollbar>
          <svg width="14" height="11" viewBox="0 0 14 11">
            <path d="M7 1.500 12 9.500H2z" fill="#8a8a8a" stroke="#8a8a8a" strokeWidth="2" strokeLinejoin="round" />
          </svg>
          <Thumb />
          <svg width="14" height="11" viewBox="0 0 14 11">
            <path d="M7 9.500 12 1.500H2z" fill="#8a8a8a" stroke="#8a8a8a" strokeWidth="2" strokeLinejoin="round" />
          </svg>
        </Scrollbar>
        <EdgeShadow />
        <StatusBubble>
          <Label $size={14} $ls={-0.2} $color="#444">localhost:8000</Label>
        </StatusBubble>
      </Viewport>

      <Taskbar>
        <WeatherIcon>
          <Cloud />
          <Badge>9+</Badge>
        </WeatherIcon>
        <Stack $ml={2} $w={521}>
          <Label $size={14} $ls={-0.1}>27°C</Label>
          <Label $size={14} $ls={0.35} $color="#5a6650">Cloudy</Label>
        </Stack>
        <Windows />
        <TaskSearch>
          <Line w={20} c="#222" sw={2.1}>
            <circle cx="8.500" cy="8.500" r="7" />
            <path d="m13.700 13.700 5 5" />
          </Line>
          <Slot $ml={12} $w={166}>
            <Label $size={16.5} $ls={-0.1} $color="#5f6a5b">Search</Label>
          </Slot>
          <Salad />
        </TaskSearch>
        <Apps>
          {apps.map((a, i) => (
            <AppButton key={i} $active={a.active}>
              {a.icon}
              {(a.active || a.running) && <Indicator $active={a.active} />}
            </AppButton>
          ))}
        </Apps>
        <Slot $ml={201} $w={37}>
          <Line w={14} h={10} vb="0 0 14 10" sw={1.6}>
            <path d="m1 8 6-6.500L13 8" />
          </Line>
        </Slot>
        <Slot $w={39}>
          <svg width="21" height="21" viewBox="0 0 21 21">
            <path d="M1 9A9 9 0 0 1 18 5M19 1v5h-5M2 20v-5h5M2 15.500A9 9 0 0 0 9 19.500" fill="none" stroke="#1b1b1b" strokeWidth="1.400" />
            <circle cx="15.500" cy="15" r="5.200" fill="#0078d7" />
          </svg>
        </Slot>
        <Slot $w={44}>
          <svg width="21" height="20" viewBox="0 0 21 20">
            <path d="M4 15a4 4 0 0 1 0-7.500A6.500 6.500 0 0 1 15 4.500a4.500 4.500 0 0 1 2 8.500z" fill="#8c8c8c" stroke="#333" strokeWidth="1.300" />
            <path d="M3 13.500a3 3 0 0 1 1.500-5l5-1.500L8 14z" fill="#d8d8d8" />
            <circle cx="15" cy="13.600" r="5.700" fill="#fde100" />
            <path d="M15 10.300v4.200M15 16v1.300" stroke="#333" strokeWidth="1.300" />
          </svg>
        </Slot>
        <Stack $align="center" $w={30}>
          <Label $size={14} $ls={0.1}>ENG</Label>
          <Label $size={14}>IN</Label>
        </Stack>
        <Slot $ml={22} $w={30}>
          <svg width="20" height="16" viewBox="0 0 20 16" fill="none" strokeWidth="1.400" strokeLinecap="round">
            <path d="M1 6a13 13 0 0 1 18 0M3.800 8.700a9 9 0 0 1 12.400 0" stroke="#9fb5a5" />
            <path d="M6.300 11a5.500 5.500 0 0 1 7.400 0" stroke="#1b1b1b" />
            <circle cx="10" cy="13.500" r="1.700" fill="#1b1b1b" />
          </svg>
        </Slot>
        <Slot $w={29}>
          <Line w={21} h={18} vb="0 0 21 18" sw={1.3}>
            <path d="M1 6.500h3.500L9 2.500v13l-4.500-4H1zM11.500 6.500c1 1.500 1 3.500 0 5M14 4.500c2 2.500 2 6.500 0 9M16.500 2.500c3 4 3 9 0 13" />
          </Line>
        </Slot>
        <Slot $w={30}>
          <svg width="21" height="17" viewBox="0 0 21 17">
            <path d="M6 4.500h10A1.700 1.700 0 0 1 17.700 6v7.200A1.800 1.800 0 0 1 16 15H3.500a1.800 1.800 0 0 1-1.800-1.800V10" fill="none" stroke="#1b1b1b" strokeWidth="1.400" />
            <path d="M7 6.500h9V13H4v-2.500zM18.500 7.500h1v4h-1z" fill="#1b1b1b" stroke="#1b1b1b" />
            <path d="M4 0 .5 5.500H3L2 9l4-5.500H3.500z" fill="#1b1b1b" />
          </svg>
        </Slot>
        <Stack $align="flex-end" $w={89}>
          <Label $size={14}>4:42 pm</Label>
          <Label $size={14} $ls={0.25}>27/07/2025</Label>
        </Stack>
      </Taskbar>
    </Screen>
  );
}
